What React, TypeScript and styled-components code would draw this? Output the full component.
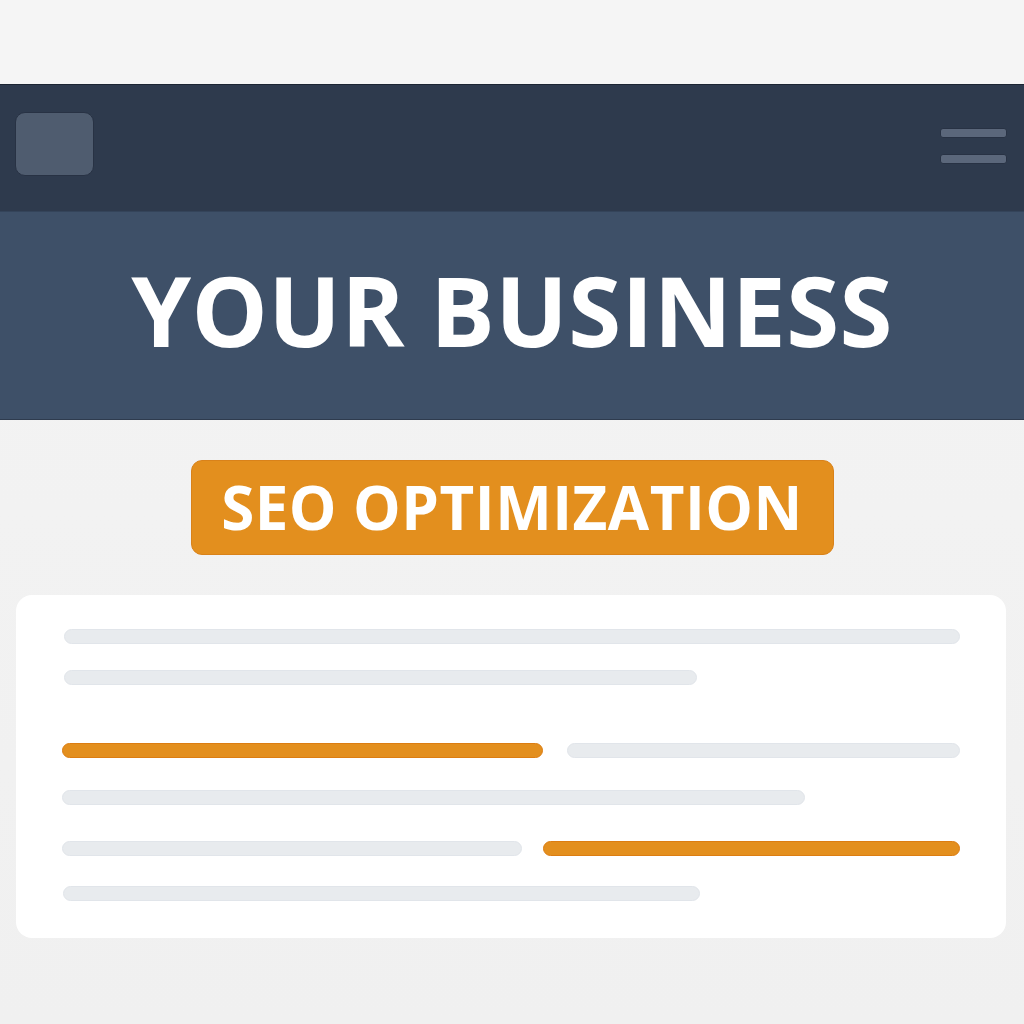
import styled, { createGlobalStyle } from "styled-components";

const GlobalStyle = createGlobalStyle`
  html, body {
    margin: 0;
    padding: 0;
    background: #f2f2f2;
    font-family: "Open Sans", "Noto Sans", sans-serif;
  }
`;

const Page = styled.div`
  width: 1024px;
  height: 1024px;
  overflow: hidden;
  background: linear-gradient(#f4f4f4, #f0f0f0);
  display: flex;
  flex-direction: column;
`;

const TopSpace = styled.div`
  height: 84px;
  background: #f5f5f5;
`;

const NavBar = styled.header`
  height: 127px;
  background: #2e3a4d;
  border-top: 1px solid #1c2533;
  display: flex;
  justify-content: space-between;
  align-items: flex-start;
  padding: 27px 17px 0 15px;
  box-sizing: border-box;
`;

const Logo = styled.div`
  width: 79px;
  height: 64px;
  border-radius: 10px;
  background: #4f5c6f;
  border: 1px solid #283244;
  box-sizing: border-box;
`;

const Burger = styled.div`
  display: flex;
  flex-direction: column;
  gap: 16px;
  padding-top: 16px;
`;

const BurgerBar = styled.span`
  display: block;
  width: 67px;
  height: 10px;
  border-radius: 3px;
  background: #5b677b;
  border: 1px solid #283244;
  box-sizing: border-box;
`;

const Hero = styled.section`
  height: 209px;
  background: #3e5068;
  border-top: 1px solid #34445a;
  border-bottom: 1px solid #2e3b4e;
  box-sizing: border-box;
  display: flex;
  align-items: center;
  justify-content: center;
`;

const HeroTitle = styled.h1`
  margin: 0 0 12px 0;
  color: #ffffff;
  font-family: "Open Sans", "Noto Sans", sans-serif;
  font-weight: 700;
  font-size: 96px;
  line-height: 1;
  letter-spacing: 0.4px;
`;

const BadgeWrap = styled.div`
  display: flex;
  justify-content: center;
  padding-top: 40px;
`;

const Badge = styled.div`
  width: 643px;
  height: 95px;
  border-radius: 11px;
  background: #e38f1e;
  border: 1px solid #d9821a;
  box-sizing: border-box;
  display: flex;
  align-items: center;
  justify-content: center;
  padding-bottom: 2px;
  color: #ffffff;
  font-family: "Open Sans", "Noto Sans", sans-serif;
  font-weight: 700;
  font-size: 60px;
  letter-spacing: 0.5px;
  line-height: 1;
`;

const Card = styled.div`
  margin: 40px 18px 0 16px;
  height: 343px;
  background: #ffffff;
  border-radius: 16px;
  padding: 34px 46px 0 46px;
  box-sizing: border-box;
  display: flex;
  flex-direction: column;
`;

const Row = styled.div<{ $top: number }>`
  display: flex;
  gap: 22px;
  margin-top: ${(p) => p.$top}px;
`;

const Line = styled.div<{ $width: number; $accent?: boolean; $shift?: number }>`
  width: ${(p) => p.$width}px;
  height: 15px;
  border-radius: 8px;
  margin-left: ${(p) => p.$shift ?? 0}px;
  background: ${(p) => (p.$accent ? "#e38f1e" : "#e8ebee")};
  border: 1px solid ${(p) => (p.$accent ? "#dc7d12" : "#e1e5ea")};
  box-sizing: border-box;
`;

export default function App() {
  return (
    <>
      <GlobalStyle />
      <Page>
        <TopSpace />
        <NavBar>
          <Logo />
          <Burger>
            <BurgerBar />
            <BurgerBar />
          </Burger>
        </NavBar>
        <Hero>
          <HeroTitle>YOUR BUSINESS</HeroTitle>
        </Hero>
        <BadgeWrap>
          <Badge>SEO OPTIMIZATION</Badge>
        </BadgeWrap>
        <Card>
          <Row $top={0}>
            <Line $width={896} $shift={2} />
          </Row>
          <Row $top={26}>
            <Line $width={633} $shift={2} />
          </Row>
          <Row $top={58}>
            <Line $width={482} $accent />
            <Line $width={393} $shift={2} />
          </Row>
          <Row $top={32}>
            <Line $width={743} />
          </Row>
          <Row $top={36}>
            <Line $width={460} />
            <Line $width={417} $accent $shift={-1} />
          </Row>
          <Row $top={30}>
            <Line $width={637} $shift={1} />
          </Row>
        </Card>
      </Page>
    </>
  );
}
